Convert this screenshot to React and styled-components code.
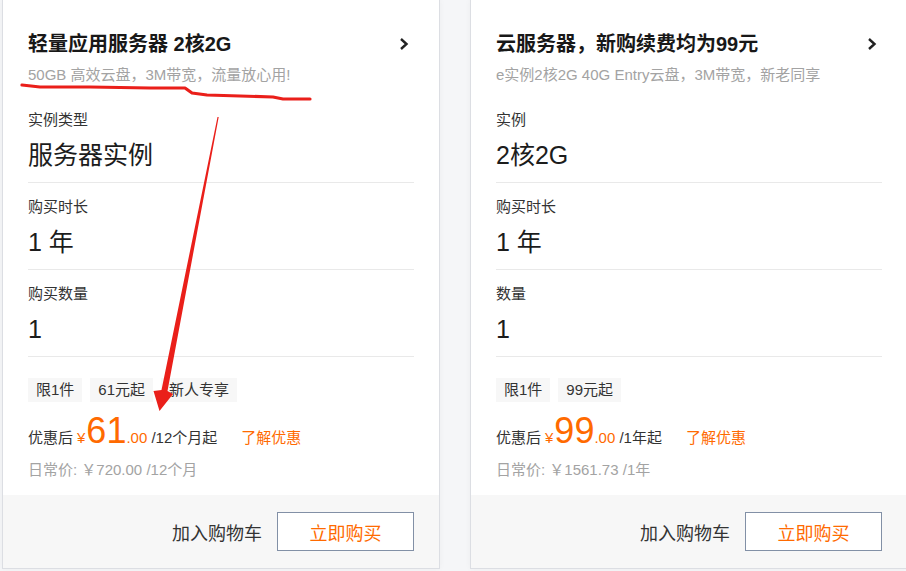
import React from 'react';
import styled, { createGlobalStyle } from 'styled-components';

const GlobalStyle = createGlobalStyle`
  html, body {
    margin: 0;
    padding: 0;
    background: #f5f6f8;
    overflow: hidden;
  }
  body {
    font-family: "Liberation Sans", "Noto Sans CJK SC", sans-serif;
    color: #333;
  }
`;

const Page = styled.div`
  position: relative;
  width: 906px;
  height: 571px;
  overflow: hidden;
`;

const Row = styled.div`
  display: flex;
  gap: 30px;
  padding-left: 2px;
  margin-top: -1px;
`;

const Card = styled.div`
  flex: 0 0 438px;
  height: 570px;
  box-sizing: border-box;
  border: 1px solid #dcdee3;
  background: #fff;
  display: flex;
  flex-direction: column;
  box-shadow: 0 0 6px rgba(0, 0, 0, 0.04);
`;

const CardBody = styled.div`
  flex: 1;
  padding: 0 25px;
`;

const Header = styled.div`
  padding: 31px 0 11px;
`;

const TitleRow = styled.div`
  display: flex;
  align-items: center;
  justify-content: space-between;
`;

const Title = styled.div`
  font-size: 20px;
  line-height: 26px;
  font-weight: bold;
  color: #181818;
`;

const Chevron = styled.svg`
  width: 10px;
  height: 14px;
  margin-right: 5px;
`;

const Subtitle = styled.div`
  margin-top: 8px;
  font-size: 15px;
  line-height: 20px;
  color: #a3a3a3;
`;

const Section = styled.div`
  padding: 14px 0 11px;
  border-bottom: 1px solid #e9e9e9;
`;

const Label = styled.div`
  font-size: 15px;
  line-height: 20px;
  color: #333;
`;

const Value = styled.div`
  margin-top: 9px;
  font-size: 25px;
  line-height: 32px;
  color: #1c1c1c;
`;

const Tags = styled.div`
  display: flex;
  gap: 8px;
  margin-top: 21px;
`;

const Tag = styled.span`
  padding: 0 8px;
  line-height: 24px;
  font-size: 15px;
  color: #333;
  background: #f7f7f7;
`;

const PriceRow = styled.div`
  display: flex;
  align-items: baseline;
  margin-top: 9px;
  font-size: 15px;
  line-height: 20px;
  color: #333;
`;

const Orange = styled.span`
  color: #ff6a00;
`;

const Yen = styled(Orange)`
  margin: 0 1px 0 4px;
`;

const BigNum = styled(Orange)`
  font-size: 36px;
  line-height: 40px;
`;

const Link = styled(Orange)`
  margin-left: 24px;
`;

const Daily = styled.div`
  margin-top: 9px;
  font-size: 15px;
  line-height: 20px;
  color: #a3a3a3;
`;

const Footer = styled.div`
  height: 73px;
  background: #f7f7f7;
  display: flex;
  align-items: center;
  justify-content: flex-end;
  gap: 15px;
  padding: 0 25px;
`;

const CartText = styled.span`
  font-size: 18px;
  color: #333;
`;

const BuyButton = styled.button`
  width: 137px;
  height: 39px;
  box-sizing: border-box;
  border: 1px solid #8290a6;
  background: #fff;
  color: #ff6a00;
  font-family: inherit;
  font-size: 18px;
  cursor: pointer;
`;

const Overlay = styled.svg`
  position: absolute;
  left: 0;
  top: 0;
  pointer-events: none;
`;

const cards = [
  {
    title: '轻量应用服务器 2核2G',
    sub: '50GB 高效云盘，3M带宽，流量放心用!',
    rows: [
      ['实例类型', '服务器实例'],
      ['购买时长', '1 年'],
      ['购买数量', '1'],
    ],
    tags: ['限1件', '61元起', '新人专享'],
    price: '61',
    unit: '/12个月起',
    daily: '日常价: ￥720.00 /12个月',
  },
  {
    title: '云服务器，新购续费均为99元',
    sub: 'e实例2核2G 40G Entry云盘，3M带宽，新老同享',
    rows: [
      ['实例', '2核2G'],
      ['购买时长', '1 年'],
      ['数量', '1'],
    ],
    tags: ['限1件', '99元起'],
    price: '99',
    unit: '/1年起',
    daily: '日常价: ￥1561.73 /1年',
  },
];

function ProductCard({ c }) {
  return (
    <Card>
      <CardBody>
        <Header>
          <TitleRow>
            <Title>{c.title}</Title>
            <Chevron viewBox="0 0 10 14">
              <polyline points="2,2 7.5,7 2,12" fill="none" stroke="#222" strokeWidth="2.4" />
            </Chevron>
          </TitleRow>
          <Subtitle>{c.sub}</Subtitle>
        </Header>
        {c.rows.map(([l, v]) => (
          <Section key={l}>
            <Label>{l}</Label>
            <Value>{v}</Value>
          </Section>
        ))}
        <Tags>
          {c.tags.map((t) => (
            <Tag key={t}>{t}</Tag>
          ))}
        </Tags>
        <PriceRow>
          优惠后<Yen>¥</Yen>
          <BigNum>{c.price}</BigNum>
          <Orange>.00</Orange>&nbsp;{c.unit}
          <Link>了解优惠</Link>
        </PriceRow>
        <Daily>{c.daily}</Daily>
      </CardBody>
      <Footer>
        <CartText>加入购物车</CartText>
        <BuyButton>立即购买</BuyButton>
      </Footer>
    </Card>
  );
}

export default function App() {
  return (
    <Page>
      <GlobalStyle />
      <Row>
        {cards.map((c) => (
          <ProductCard key={c.title} c={c} />
        ))}
      </Row>
      <Overlay width="906" height="571" viewBox="0 0 906 571">
        <polyline
          points="22,85 40,87 90,87 150,88 185,88 192,93 207,95 240,96 273,97 283,99 310,99"
          fill="none"
          stroke="#ea1f1a"
          strokeWidth="3.2"
          strokeLinejoin="round"
          strokeLinecap="round"
        />
        <polygon
          points="217.5,117 218.7,117 167.5,391 173,394 159.5,411 153.5,391 161.5,390"
          fill="#ea1f1a"
        />
      </Overlay>
    </Page>
  );
}
